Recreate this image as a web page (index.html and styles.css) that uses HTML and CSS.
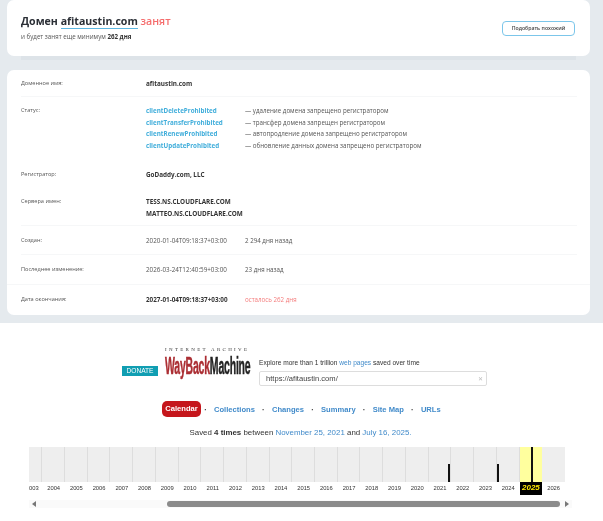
FILE: index.html
```html
<!DOCTYPE html>
<html lang="ru">
<head>
<meta charset="utf-8">
<title>afitaustin.com</title>
<link rel="stylesheet" href="styles.css">
</head>
<body>
<div class="page">
<section class="whois">
  <div class="card head">
    <div>
      <h1 class="title">Домен <span class="dom">afitaustin.com</span> <span class="busy">занят</span></h1>
      <p class="sub">и будет занят еще минимум <b>262 дня</b></p>
    </div>
    <button class="pick">Подобрать похожий</button>
  </div>
  <div class="card info">
    <div class="row line"><div class="k">Доменное имя:</div><div class="v strong">afitaustin.com</div></div>
    <div class="row status">
      <div class="k">Статус:</div>
      <div class="statuslist">
        <a class="code">clientDeleteProhibited</a><span class="desc">— удаление домена запрещено регистратором</span>
        <a class="code">clientTransferProhibited</a><span class="desc">— трансфер домена запрещен регистратором</span>
        <a class="code">clientRenewProhibited</a><span class="desc">— автопродление домена запрещено регистратором</span>
        <a class="code">clientUpdateProhibited</a><span class="desc">— обновление данных домена запрещено регистратором</span>
      </div>
    </div>
    <div class="row"><div class="k">Регистратор:</div><div class="v strong">GoDaddy.com, LLC</div></div>
    <div class="row ns line"><div class="k">Сервера имен:</div><div class="v strong">TESS.NS.CLOUDFLARE.COM<br>MATTEO.NS.CLOUDFLARE.COM</div></div>
    <div class="row date line"><div class="k">Создан:</div><div class="v stamp">2020-01-04T09:18:37+03:00</div><div class="ago">2 294 дня назад</div></div>
    <div class="row date"><div class="k">Последнее изменение:</div><div class="v stamp">2026-03-24T12:40:59+03:00</div><div class="ago">23 дня назад</div></div>
    <div class="row date last"><div class="k">Дата окончания:</div><div class="v stamp strong">2027-01-04T09:18:37+03:00</div><div class="ago left">осталось 262 дня</div></div>
  </div>
</section>
<section class="wayback">
  <div class="wb-top">
    <a class="donate">DONATE</a>
    <div class="logo">
      <div class="ia">INTERNET ARCHIVE</div>
      <div class="wm"><span class="way">WayBack</span><span class="mach">Machine</span></div>
    </div>
    <div class="search">
      <div class="explore">Explore more than 1 trillion <a>web pages</a> saved over time</div>
      <div class="input"><span>https://afitaustin.com/</span><span class="x">✕</span></div>
    </div>
  </div>
  <nav class="tabs">
    <a class="tab on">Calendar</a><i>·</i><a class="tab">Collections</a><i>·</i><a class="tab">Changes</a><i>·</i><a class="tab">Summary</a><i>·</i><a class="tab">Site Map</a><i>·</i><a class="tab">URLs</a>
  </nav>
  <p class="saved">Saved <b>4 times</b> between <a>November 25, 2021</a> and <a>July 16, 2025.</a></p>
  <div class="tl">
    <div class="col first"></div><div class="col"></div><div class="col"></div><div class="col"></div><div class="col"></div><div class="col"></div><div class="col"></div><div class="col"></div><div class="col"></div><div class="col"></div><div class="col"></div><div class="col"></div><div class="col"></div><div class="col"></div><div class="col"></div><div class="col"></div><div class="col"></div><div class="col"></div><div class="col b2021"><i class="bar short"></i></div><div class="col"></div><div class="col b2023"><i class="bar short"></i></div><div class="col"></div><div class="col cur"><i class="bar"></i></div><div class="col end"></div>
  </div>
  <div class="years">
    <span class="first">003</span><span>2004</span><span>2005</span><span>2006</span><span>2007</span><span>2008</span><span>2009</span><span>2010</span><span>2011</span><span>2012</span><span>2013</span><span>2014</span><span>2015</span><span>2016</span><span>2017</span><span>2018</span><span>2019</span><span>2020</span><span>2021</span><span>2022</span><span>2023</span><span>2024</span><span class="cury">2025</span><span>2026</span>
  </div>
  <div class="track">
    <i class="arr l"></i><div class="thumbarea"><div class="thumb"></div></div><i class="arr r"></i>
  </div>
</section>
</div>
</body>
</html>
```

FILE: styles.css
```css
* { box-sizing: border-box; }
html, body { margin: 0; padding: 0; height: 100%; overflow: hidden; background: #fff; }
.page { width: 603px; height: 521px; filter: blur(0.45px); overflow: hidden; }
.whois { height: 323px; background: #e5eaee; padding: 0 13px 0 7px; font-family: "Open Sans", sans-serif; color: #333; }
.card { background: #fff; border-radius: 7px; }
.head { height: 56px; margin-bottom: 14px; padding: 14px 15px 0 14px; display: flex; justify-content: space-between; align-items: flex-start; box-shadow: 0 18px 0 -14px #dde3e8; }
.title { margin: 0; font-size: 10.6px; line-height: 14px; font-weight: 700; color: #2b2f36; }
.dom { border-bottom: 1px solid #5db7e2; }
.busy { color: #f56d6d; font-weight: 600; }
.sub { margin: 4px 0 0; font-size: 6.2px; line-height: 9px; color: #555; }
.sub b { color: #333; }
.pick { width: 73px; height: 15px; margin-top: 7px; padding: 0 0 1px; border: 1px solid #7cc6ea; border-radius: 4px; background: #fff; font: 600 5.2px "Open Sans", sans-serif; color: #444; }
.info { height: 245px; font-size: 6.2px; }
.row { display: flex; margin: 0 13px 0 14px; padding-top: 8px; height: 27px; line-height: 11.5px; }
.row.line { border-bottom: 1px solid #f6f7f8; }
.status { height: 64.25px; }
.ns { height: 37.75px; }
.date { height: 29px; padding-top: 8.5px; }
.date.line { border-bottom: 1px solid #f6f7f8; }
.last { margin: 0; padding: 9px 13px 0 14px; border-top: 1px solid #f6f7f8; height: 30px; }
.k { width: 125px; flex: none; color: #555; font-size: 5.6px; }
.v { width: 99px; flex: none; color: #555; }
.strong { font-weight: 700; color: #333; font-size: 6.35px; }
.ns .v, .row:first-child .v { width: auto; }
.row .v.strong { white-space: nowrap; }
.stamp { font-size: 6.3px; white-space: nowrap; }
.ago { color: #555; font-size: 6.2px; }
.left { color: #f47a7a; }
.statuslist { display: grid; grid-template-columns: 99px auto; grid-auto-rows: 11.5px; font-size: 6.2px; }
.code { color: #41aedb; font-weight: 700; font-size: 6.25px; }
.desc { color: #555; }

.wayback { font-family: "Liberation Sans", sans-serif; height: 198px; color: #333; }
.wb-top { display: flex; align-items: flex-start; padding: 26px 0 0 122px; height: 80px; }
.donate { width: 36px; height: 10px; margin-top: 17px; background: #109eb2; color: #fff; font-size: 6.6px; line-height: 10px; text-align: center; }
.logo { width: 86px; margin-left: 7px; }
.ia { font: 5px/6px "Liberation Serif", serif; letter-spacing: 2.3px; white-space: nowrap; color: #333; margin-top: -2px; }
.wm { height: 23px; margin-top: 2px; white-space: nowrap; font: 700 23px/23px "Liberation Sans", sans-serif; transform-origin: 0 50%; transform: scaleX(0.455); width: 190px; letter-spacing: -0.4px; -webkit-text-stroke: 0.5px currentColor; }
.way { color: #ab2e33; }
.mach { color: #222; }
.search { margin-left: 8px; width: 228px; }
.explore { font-size: 6.6px; line-height: 9px; margin-top: 9px; color: #333; white-space: nowrap; }
.explore a, .saved a { color: #428bca; }
.input { height: 15px; margin-top: 4px; border: 1px solid #ddd; border-radius: 2px; padding: 0 3px 0 6px; display: flex; justify-content: space-between; align-items: center; font-size: 7.6px; color: #444; }
.x { color: #bbb; font-size: 6px; }
.tabs { display: flex; align-items: center; height: 16px; margin: -2px 0 0 162px; font-size: 7.6px; font-weight: 700; color: #428bca; }
.tabs i { width: 17px; text-align: center; color: #444; font-style: normal; font-size: 8px; }
.tab { white-space: nowrap; }
.tab.on { width: 39px; height: 16px; line-height: 15px; text-align: center; background: #c5161c; color: #fff; border-radius: 5px; margin-right: -4px; }
.saved { margin: 10px 0 0; font-size: 7.9px; line-height: 12px; text-align: center; padding-right: 2px; color: #333; }
.saved b { font-weight: 700; }
.tl { display: grid; grid-template-columns: 13.3px repeat(23, 1fr); margin: 8px 38px 0 29px; height: 35px; background: #eee; }
.col { border-right: 1px solid #ddd; position: relative; }
.col.end { border-right: 0; }
.col.cur { background: #ffff9e; border-right: 0; }
.bar { position: absolute; bottom: 0; left: 11.6px; width: 2px; height: 100%; background: #111; }
.bar.short { height: 18px; }
.b2021 .bar { left: 19.5px; }
.b2023 .bar { left: 22.7px; }
.years { display: grid; grid-template-columns: 13.3px repeat(23, 1fr); margin: 0 38px 0 29px; height: 13px; font-size: 5.8px; line-height: 12px; text-align: center; color: #333; }
.years .first { text-align: left; overflow: hidden; }
.cury { background: #000; color: #ffe800; font-weight: 700; font-style: italic; font-size: 8px; }
.track { display: flex; align-items: center; margin: 5px 31px 0 29px; height: 8px; background: #fafafa; }
.arr { width: 0; height: 0; border-top: 3px solid transparent; border-bottom: 3px solid transparent; flex: none; }
.arr.l { border-right: 4px solid #777; margin-left: 3px; }
.arr.r { border-left: 4px solid #777; margin-right: 3px; }
.thumbarea { flex: 1; padding: 0 5px 0 131px; }
.thumb { height: 6px; background: #8b8b8b; border-radius: 3px; }
```
